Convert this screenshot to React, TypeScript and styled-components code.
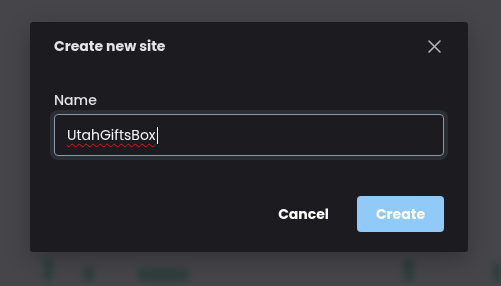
import styled, { createGlobalStyle } from "styled-components";

const GlobalStyle = createGlobalStyle`
  html, body {
    margin: 0;
    padding: 0;
    background: #46464a;
    font-family: "Poppins", "Inter", "Liberation Sans", sans-serif;
    overflow: hidden;
  }
  * {
    box-sizing: border-box;
  }
`;

const Page = styled.div`
  width: 501px;
  height: 286px;
  padding: 258px 0 0 44px;
  background: #46464a;
`;

const BlurRow = styled.div`
  display: flex;
  align-items: flex-end;
  gap: 24px;
  filter: blur(3px);
  opacity: 0.55;
`;

const Blob = styled.div<{ $w: number; $h: number; $ml?: number }>`
  width: ${({ $w }) => $w}px;
  height: ${({ $h }) => $h}px;
  margin-left: ${({ $ml }) => $ml ?? 0}px;
  background: #1f3a30;
  border-radius: 4px;
`;

const Overlay = styled.div`
  position: fixed;
  inset: 0;
  display: flex;
  align-items: flex-start;
  justify-content: flex-start;
  padding: 22px 0 0 30px;
`;

const Dialog = styled.div`
  width: 438px;
  height: 230px;
  background: #1c1c20;
  border-radius: 3px;
  box-shadow: 0 8px 24px rgba(0, 0, 0, 0.25);
  display: flex;
  flex-direction: column;
`;

const Header = styled.div`
  display: flex;
  align-items: center;
  justify-content: space-between;
  padding: 12px 22px 0 24px;
  height: 36px;
`;

const Title = styled.h2`
  margin: 0;
  font-size: 14px;
  font-weight: 700;
  line-height: 24px;
  color: #e4e4e6;
`;

const CloseButton = styled.button`
  width: 24px;
  height: 24px;
  padding: 0;
  border: none;
  background: transparent;
  display: flex;
  align-items: center;
  justify-content: center;
  color: #b4b4b8;
  cursor: pointer;
`;

const Body = styled.div`
  padding: 32px 24px 0;
`;

const Label = styled.label`
  display: block;
  font-size: 14px;
  font-weight: 500;
  line-height: 20px;
  color: #e2e2e4;
  margin-bottom: 4px;
`;

const Field = styled.div`
  height: 42px;
  border: 1px solid #8a98ac;
  border-radius: 4px;
  box-shadow: 0 0 0 4px #2a2e35;
  display: flex;
  align-items: center;
  padding: 0 12px;
  font-size: 14px;
  color: #f6f6f6;
`;

const Typed = styled.span`
  text-decoration: underline wavy #e01b1b;
  text-decoration-thickness: 1px;
  text-underline-offset: 3px;
`;

const Caret = styled.span`
  display: inline-block;
  width: 1px;
  height: 17px;
  background: #ffffff;
  margin-left: 1px;
`;

const Footer = styled.div`
  display: flex;
  justify-content: flex-end;
  align-items: center;
  gap: 12px;
  padding: 40px 24px 0;
`;

const TextButton = styled.button`
  height: 36px;
  padding: 0 16px;
  border: none;
  background: transparent;
  color: #ffffff;
  font-family: inherit;
  font-size: 14px;
  font-weight: 700;
  cursor: pointer;
`;

const PrimaryButton = styled.button`
  width: 87px;
  height: 36px;
  border: none;
  border-radius: 4px;
  background: #90caf9;
  color: #ffffff;
  font-family: inherit;
  font-size: 14px;
  font-weight: 700;
  cursor: pointer;
`;

const CloseIcon = () => (
  <svg width="13" height="13" viewBox="0 0 13 13" fill="none">
    <path d="M1 1L12 12M12 1L1 12" stroke="currentColor" strokeWidth="1.6" strokeLinecap="round" />
  </svg>
);

export default function App() {
  return (
    <>
      <GlobalStyle />
      <Page>
        <BlurRow>
          <Blob $w={10} $h={24} />
          <Blob $w={12} $h={16} $ml={6} />
          <Blob $w={54} $h={14} $ml={20} />
          <Blob $w={12} $h={24} $ml={190} />
          <Blob $w={10} $h={20} $ml={54} />
        </BlurRow>
      </Page>
      <Overlay>
        <Dialog role="dialog" aria-labelledby="dlg-title">
          <Header>
            <Title id="dlg-title">Create new site</Title>
            <CloseButton aria-label="Close">
              <CloseIcon />
            </CloseButton>
          </Header>
          <Body>
            <Label>Name</Label>
            <Field role="textbox">
              <Typed>UtahGiftsBox</Typed>
              <Caret />
            </Field>
          </Body>
          <Footer>
            <TextButton>Cancel</TextButton>
            <PrimaryButton>Create</PrimaryButton>
          </Footer>
        </Dialog>
      </Overlay>
    </>
  );
}
